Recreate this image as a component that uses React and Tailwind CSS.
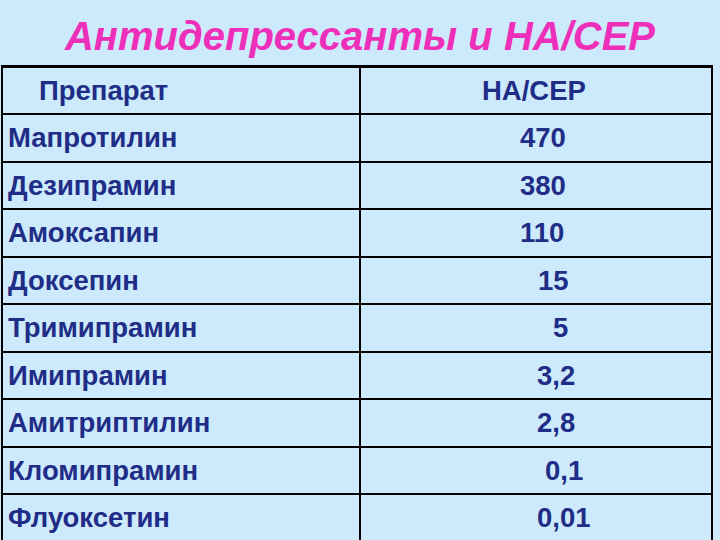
const rows = [
  { name: 'Мапротилин', value: '470', pad: 'pl-[159px]' },
  { name: 'Дезипрамин', value: '380', pad: 'pl-[159px]' },
  { name: 'Амоксапин', value: '110', pad: 'pl-[159px]' },
  { name: 'Доксепин', value: '15', pad: 'pl-[177px]' },
  { name: 'Тримипрамин', value: '5', pad: 'pl-[192px]' },
  { name: 'Имипрамин', value: '3,2', pad: 'pl-[176px]' },
  { name: 'Амитриптилин', value: '2,8', pad: 'pl-[176px]' },
  { name: 'Кломипрамин', value: '0,1', pad: 'pl-[184px]' },
  { name: 'Флуоксетин', value: '0,01', pad: 'pl-[176px]' },
];

export default function App() {
  return (
    <div className="w-[720px] h-[540px] overflow-hidden bg-[#cdeafc] font-['Liberation_Sans',Arial,sans-serif]">
      <h1 className="h-[65px] flex items-center justify-center pt-[6px] text-[40px] font-bold italic text-[#ee2fb9]">
        Антидепрессанты и НА/СЕР
      </h1>
      <div className="ml-px w-[712px] border-t-[3px] border-l-2 border-r-2 border-black text-[27.5px] font-bold text-[#1f2d87]">
        <div className="flex h-[47px] border-b-2 border-black">
          <div className="w-[358px] border-r-2 border-black flex items-center pl-[36px]">Препарат</div>
          <div className="flex-1 flex items-center pl-[121px]">НА/СЕР</div>
        </div>
        {rows.map((r) => (
          <div key={r.name} className="flex h-[47.5px] border-b-2 border-black">
            <div className="w-[358px] border-r-2 border-black flex items-center pl-[5px]">{r.name}</div>
            <div className={`flex-1 flex items-center ${r.pad}`}>{r.value}</div>
          </div>
        ))}
      </div>
    </div>
  );
}
